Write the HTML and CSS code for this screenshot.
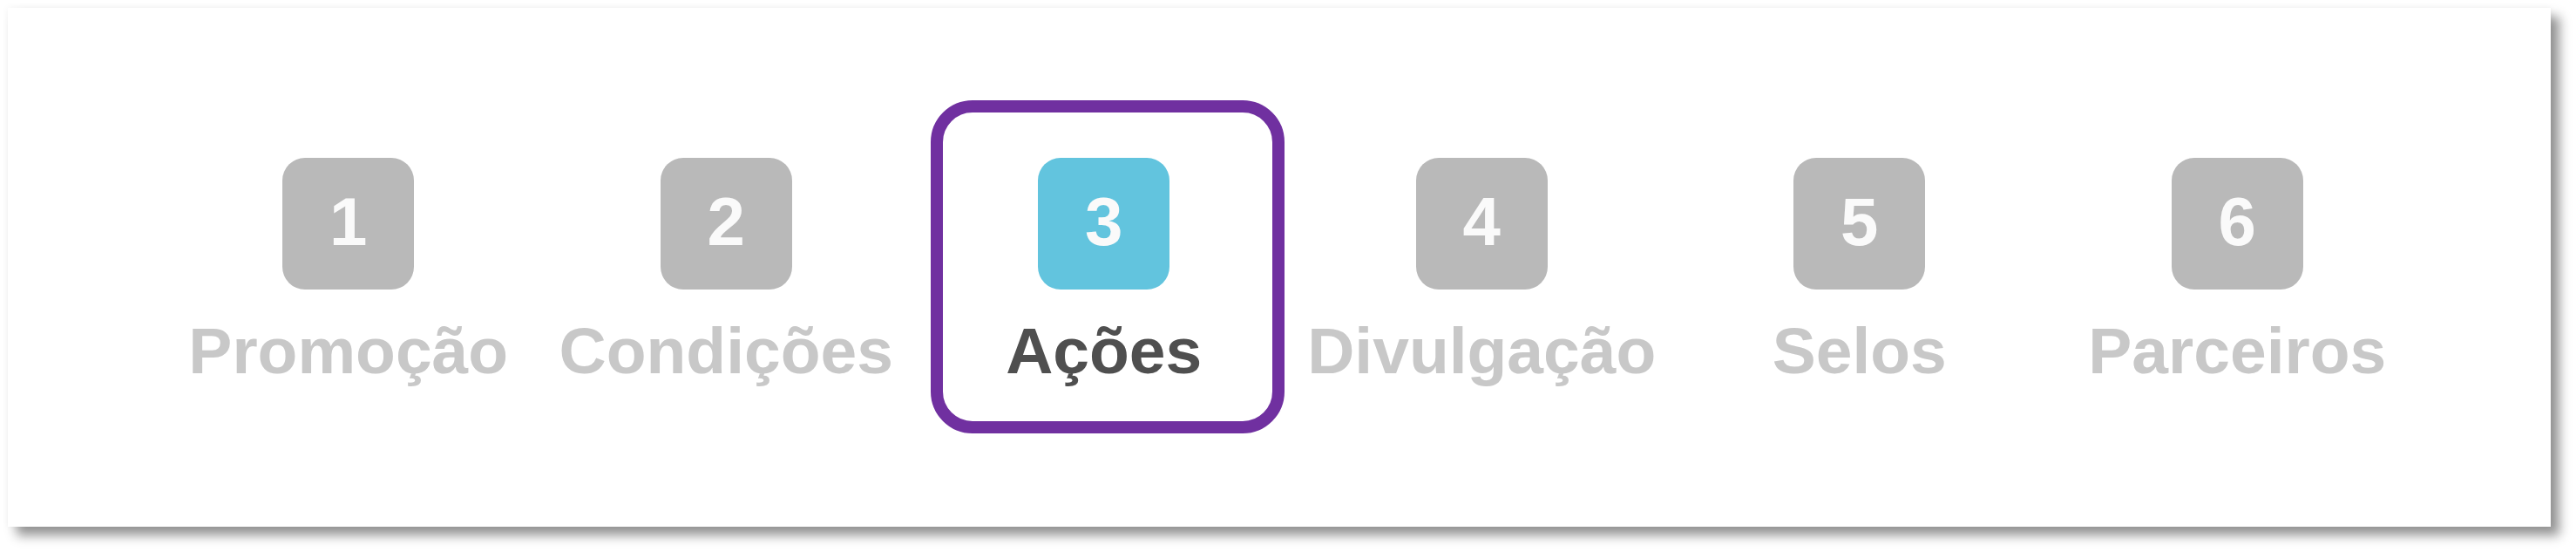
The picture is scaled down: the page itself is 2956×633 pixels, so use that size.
FILE: index.html
```html
<!DOCTYPE html>
<html lang="pt">
<head>
<meta charset="utf-8">
<title>Etapas</title>
<link rel="stylesheet" href="styles.css">
</head>
<body>
<div class="card">
  <ol class="steps">
    <li class="step"><span class="num">1</span><span class="label">Promoção</span></li>
    <li class="step"><span class="num">2</span><span class="label">Condições</span></li>
    <li class="step active"><span class="num">3</span><span class="label">Ações</span></li>
    <li class="step"><span class="num">4</span><span class="label">Divulgação</span></li>
    <li class="step"><span class="num">5</span><span class="label">Selos</span></li>
    <li class="step"><span class="num">6</span><span class="label">Parceiros</span></li>
  </ol>
</div>
</body>
</html>
```
FILE: styles.css
```css
html, body {
  margin: 0;
  padding: 0;
  background: #ffffff;
}
body {
  width: 2956px;
  height: 633px;
  overflow: hidden;
  font-family: "Liberation Sans", Arial, sans-serif;
}
.card {
  margin: 9px 0 0 9px;
  width: 2918px;
  height: 595px;
  background: #ffffff;
  box-shadow: 10px 10px 12px rgba(0, 0, 0, 0.42), 0 0 8px rgba(0, 0, 0, 0.05);
  box-sizing: border-box;
  padding: 172px 0 0 174px;
}
.steps {
  list-style: none;
  margin: 0;
  padding: 0;
  display: flex;
}
.step {
  position: relative;
  width: 433.5px;
  flex: 0 0 433.5px;
  display: flex;
  flex-direction: column;
  align-items: center;
  gap: 25px;
}
.num {
  width: 151px;
  height: 151px;
  border-radius: 26px;
  background: #b9b9b9;
  color: #fafafa;
  font-weight: bold;
  font-size: 78px;
  line-height: 146px;
  text-align: center;
}
.label {
  font-weight: bold;
  font-size: 75px;
  line-height: 90px;
  color: #c8c8c8;
  white-space: nowrap;
}
.step.active .num {
  background: #62c4de;
}
.step.active .label {
  color: #4f4f4f;
}
.step.active::after {
  content: "";
  position: absolute;
  left: 18px;
  right: 10px;
  top: -66px;
  bottom: -50px;
  border: 14px solid #7030a0;
  border-radius: 48px;
}
```
